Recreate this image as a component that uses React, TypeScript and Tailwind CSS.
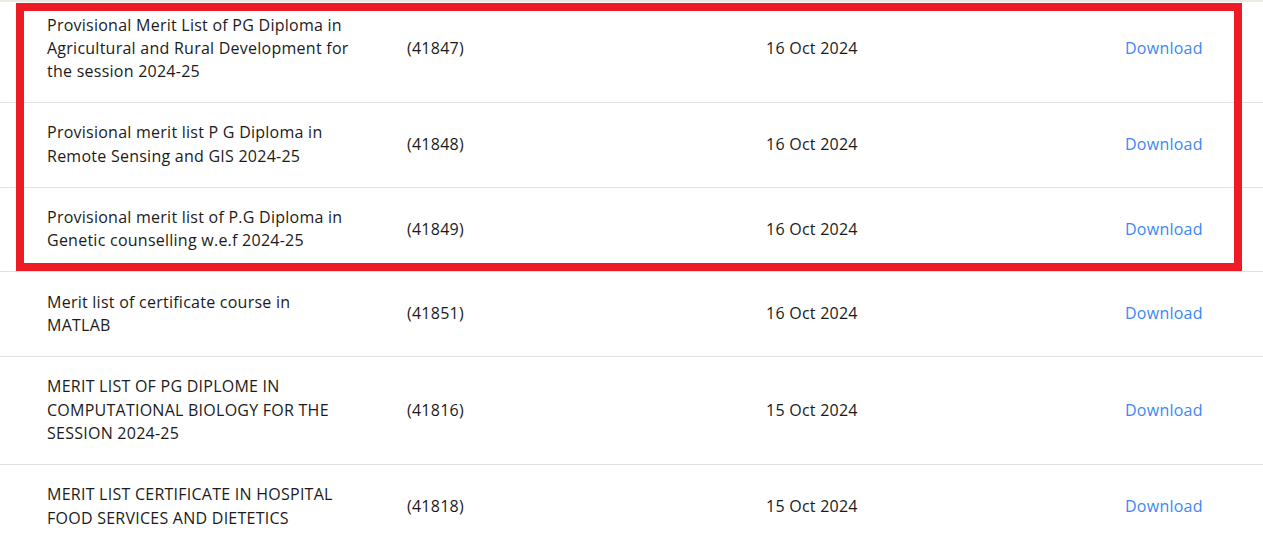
import React from 'react';

interface MeritRow {
  title: string[];
  code: string;
  date: string;
}

const rows: MeritRow[] = [
  {
    title: [
      'Provisional Merit List of PG Diploma in',
      'Agricultural and Rural Development for',
      'the session 2024-25',
    ],
    code: '(41847)',
    date: '16 Oct 2024',
  },
  {
    title: ['Provisional merit list P G Diploma in', 'Remote Sensing and GIS 2024-25'],
    code: '(41848)',
    date: '16 Oct 2024',
  },
  {
    title: ['Provisional merit list of P.G Diploma in', 'Genetic counselling w.e.f 2024-25'],
    code: '(41849)',
    date: '16 Oct 2024',
  },
  {
    title: ['Merit list of certificate course in', 'MATLAB'],
    code: '(41851)',
    date: '16 Oct 2024',
  },
  {
    title: ['MERIT LIST OF PG DIPLOME IN', 'COMPUTATIONAL BIOLOGY FOR THE', 'SESSION 2024-25'],
    code: '(41816)',
    date: '15 Oct 2024',
  },
  {
    title: ['MERIT LIST CERTIFICATE IN HOSPITAL', 'FOOD SERVICES AND DIETETICS'],
    code: '(41818)',
    date: '15 Oct 2024',
  },
];

const App: React.FC = () => {
  return (
    <div
      className="relative h-[536px] w-full overflow-hidden bg-white text-[16px] leading-[23.33px] tracking-[0.25px] text-[#1b1b1b]"
      style={{ fontFamily: '"Open Sans", "Noto Sans", sans-serif' }}
    >
      <div className="-mt-[5px]">
        {rows.map((row) => (
          <div
            key={row.code}
            className="grid grid-cols-[360px_359px_359px_1fr] items-center border-b border-[#dee2e6] py-[18.5px] pl-[47px]"
          >
            <div>
              {row.title.map((line) => (
                <div key={line} className="whitespace-nowrap">
                  {line}
                </div>
              ))}
            </div>
            <div>{row.code}</div>
            <div>{row.date}</div>
            <div>
              <a href="#" className="text-[#3c87f6]">
                Download
              </a>
            </div>
          </div>
        ))}
      </div>

      {/* faint edge of the header above */}
      <div className="absolute left-0 top-0 h-[2px] w-full bg-[#ece9e3]" />

      {/* highlight box around the first three rows */}
      <div className="pointer-events-none absolute left-[16px] top-[3px] h-[268px] w-[1226px] border-8 border-[#ed1c24]" />
    </div>
  );
};

export default App;
